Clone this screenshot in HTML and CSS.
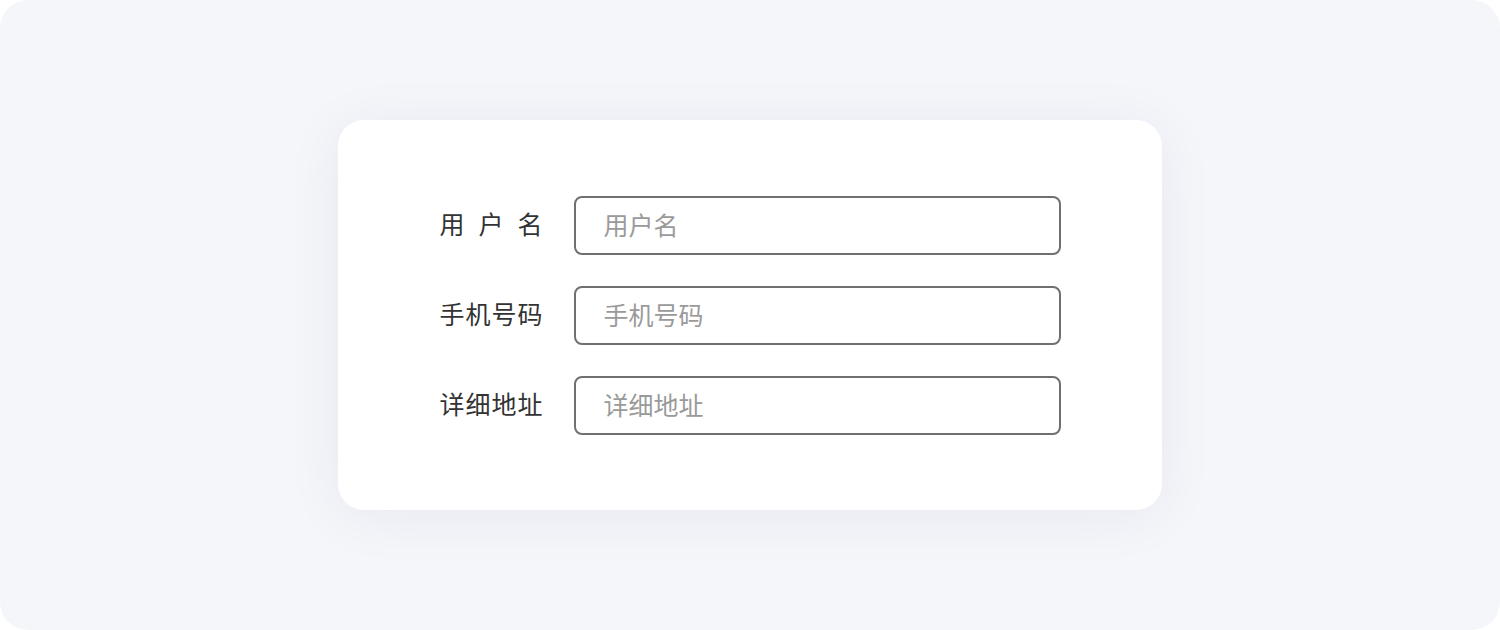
FILE: index.html
```html
<!DOCTYPE html>
<html lang="zh">
<head>
<meta charset="utf-8">
<link rel="stylesheet" href="styles.css">
</head>
<body>
<div class="page">
  <div class="card">
    <form class="form">
      <div class="row">
        <label class="label">用户名</label>
        <input class="input" type="text" placeholder="用户名">
      </div>
      <div class="row">
        <label class="label">手机号码</label>
        <input class="input" type="text" placeholder="手机号码">
      </div>
      <div class="row">
        <label class="label">详细地址</label>
        <input class="input" type="text" placeholder="详细地址">
      </div>
    </form>
  </div>
</div>
</body>
</html>
```
FILE: styles.css
```css
html, body {
  margin: 0;
  padding: 0;
  background: #ffffff;
}
.page {
  width: 1500px;
  height: 630px;
  box-sizing: border-box;
  background: #f5f6fa;
  border-radius: 28px;
  display: flex;
  align-items: center;
  justify-content: center;
  font-family: "Noto Sans CJK SC", "Noto Sans", sans-serif;
}
.card {
  width: 824px;
  height: 390px;
  box-sizing: border-box;
  background: #ffffff;
  border-radius: 26px;
  box-shadow: 0 6px 60px rgba(30, 40, 80, 0.06);
  display: flex;
  align-items: center;
  justify-content: center;
}
.form {
  display: flex;
  flex-direction: column;
  gap: 31px;
  margin: 0;
}
.row {
  display: flex;
  align-items: center;
  gap: 31px;
}
.label {
  width: 103px;
  font-size: 25px;
  color: #333333;
  text-align: justify;
  text-align-last: justify;
  line-height: 1;
  white-space: nowrap;
  padding-bottom: 3px;
}
.input {
  width: 487px;
  height: 59px;
  box-sizing: border-box;
  border: 2px solid #707070;
  border-radius: 8px;
  padding: 0 28px 3px;
  font-family: "Noto Sans CJK SC", "Noto Sans", sans-serif;
  font-size: 25px;
  color: #333333;
  background: #ffffff;
  outline: none;
  margin: 0;
}
.input::placeholder {
  color: #9a9a9a;
}
```
